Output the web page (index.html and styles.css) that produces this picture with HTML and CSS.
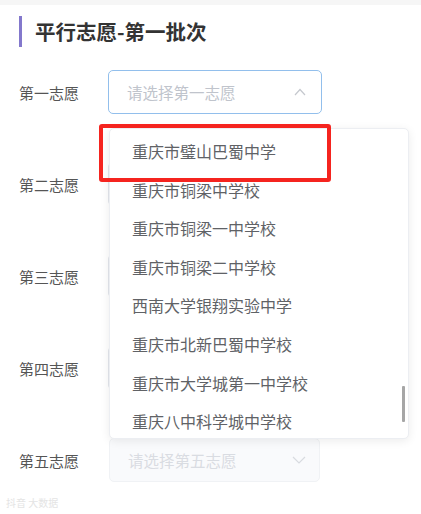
FILE: index.html
```html
<!DOCTYPE html>
<html lang="zh-CN">
<head>
    <meta charset="UTF-8">
    <meta name="viewport" content="width=device-width, initial-scale=1.0">
    <title>平行志愿-第一批次</title>
    <link rel="stylesheet" href="styles.css">
</head>
<body>
    <div class="top-strip"></div>
    <div class="page">
        <h2 class="section-title">平行志愿-第一批次</h2>

        <div class="form">
            <div class="form-row">
                <label class="form-label">第一志愿</label>
                <div class="select is-open">
                    <span class="placeholder">请选择第一志愿</span>
                    <svg class="arrow" width="12" height="8" viewBox="0 0 12 8"><path d="M1 7 L6 1.5 L11 7" fill="none" stroke="#c5c8ce" stroke-width="1.2"/></svg>
                </div>
            </div>
            <!-- rows 2-4 sit under the open dropdown -->
            <div class="form-row">
                <label class="form-label">第二志愿</label>
                <div class="select"></div>
            </div>
            <div class="form-row">
                <label class="form-label">第三志愿</label>
                <div class="select"></div>
            </div>
            <div class="form-row">
                <label class="form-label">第四志愿</label>
                <div class="select"></div>
            </div>
            <div class="form-row">
                <label class="form-label">第五志愿</label>
                <div class="select is-disabled">
                    <span class="placeholder">请选择第五志愿</span>
                    <svg class="arrow" width="14" height="8" viewBox="0 0 14 8"><path d="M1 1 L7 7 L13 1" fill="none" stroke="#d8dbe0" stroke-width="1.2"/></svg>
                </div>
            </div>

            <div class="dropdown">
                <ul class="options">
                    <li>重庆市璧山巴蜀中学</li>
                    <li>重庆市铜梁中学校</li>
                    <li>重庆市铜梁一中学校</li>
                    <li>重庆市铜梁二中学校</li>
                    <li>西南大学银翔实验中学</li>
                    <li>重庆市北新巴蜀中学校</li>
                    <li>重庆市大学城第一中学校</li>
                    <li>重庆八中科学城中学校</li>
                </ul>
                <div class="scroll-thumb"></div>
            </div>
            <div class="highlight-box"></div>
        </div>

        <div class="watermark">抖音 大数据</div>
    </div>
</body>
</html>
```

FILE: styles.css
```css
body {
    margin: 0;
    background: #fff;
    font-family: "Noto Sans CJK SC", "Noto Sans", sans-serif;
    color: #333;
}
.top-strip {
    height: 5px;
    background: #f6f6f6;
}
.page {
    position: relative;
    padding: 11px 0 0 19px;
    height: 509px;
    box-sizing: border-box;
}
.section-title {
    margin: 0;
    height: 31px;
    border-left: 3px solid #8378cc;
    padding-left: 13px;
    font-size: 20.5px;
    font-weight: 700;
    line-height: 31px;
    color: #333;
}
.form {
    position: relative;
    margin-top: 23px;
}
.form-row {
    display: flex;
    align-items: center;
    height: 44px;
    margin-bottom: 48px;
}
.form-label {
    width: 89px;
    font-size: 15px;
    color: #555;
}
.select {
    position: relative;
    display: flex;
    align-items: center;
    width: 214px;
    height: 44px;
    box-sizing: border-box;
    padding-left: 18px;
    border: 1px solid #e4e7ed;
    border-radius: 5px;
    background: #fff;
}
.select.is-open {
    border-color: #92bfec;
}
.select.is-disabled {
    width: 211px;
    margin-left: 1px;
    background: #f9fafc;
    border-color: #f0f2f5;
}
.placeholder {
    font-size: 15.5px;
    color: #c0c4cc;
}
.is-disabled .placeholder {
    color: #d9dce2;
}
.arrow {
    position: absolute;
    right: 15px;
    top: 50%;
    margin-top: -4px;
}
.is-disabled .arrow {
    right: 13px;
}
.dropdown {
    position: absolute;
    left: 90px;
    top: 58px;
    width: 300px;
    height: 311px;
    box-sizing: border-box;
    background: #fff;
    border: 1px solid #eceef2;
    border-radius: 5px;
    box-shadow: 0 2px 10px rgba(0, 0, 0, 0.08);
    overflow: hidden;
}
.options {
    list-style: none;
    margin: 0;
    padding: 3px 0 0;
}
.options li {
    height: 38.6px;
    line-height: 38.6px;
    padding-left: 22px;
    font-size: 16px;
    color: #606266;
    white-space: nowrap;
}
.scroll-thumb {
    position: absolute;
    right: 3px;
    top: 257px;
    width: 3px;
    height: 36px;
    border-radius: 1px;
    background: #a6a6a6;
}
.highlight-box {
    position: absolute;
    left: 80px;
    top: 54px;
    width: 232px;
    height: 58px;
    box-sizing: border-box;
    border: 4px solid #f5241f;
    border-radius: 3px;
}
.watermark {
    position: absolute;
    left: 6px;
    bottom: 4px;
    font-size: 10px;
    color: #e4e4e4;
}
```
